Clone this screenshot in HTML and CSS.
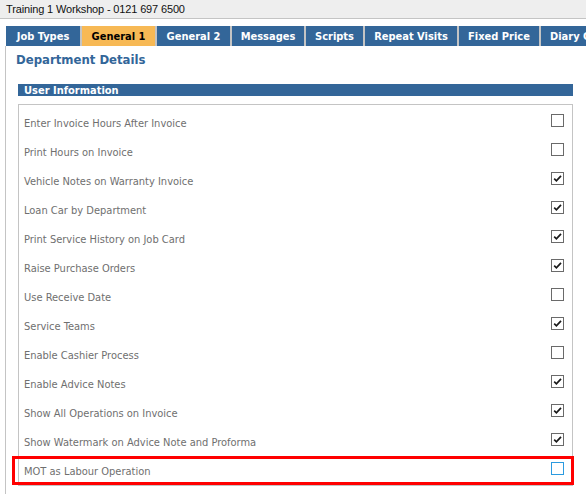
FILE: index.html
```html
<!DOCTYPE html>
<html>
<head>
<meta charset="utf-8">
<link rel="stylesheet" href="styles.css">
</head>
<body>
<div class="topbar">Training 1 Workshop - 0121 697 6500</div>
<div class="tabs">
  <div class="tab w74">Job Types</div>
  <div class="tab active w73">General 1</div>
  <div class="tab w73">General 2</div>
  <div class="tab w72">Messages</div>
  <div class="tab w57">Scripts</div>
  <div class="tab w92">Repeat Visits</div>
  <div class="tab w80">Fixed Price</div>
  <div class="tab w92">Diary Control</div>
</div>
<div class="panel">
  <h1 class="heading">Department Details</h1>
  <div class="section-bar">User Information</div>
  <div class="box">
    <div class="row"><span class="label">Enter Invoice Hours After Invoice</span><span class="cb"></span></div>
    <div class="row"><span class="label">Print Hours on Invoice</span><span class="cb"></span></div>
    <div class="row"><span class="label">Vehicle Notes on Warranty Invoice</span><span class="cb checked"><svg viewBox="0 0 11 11" width="11" height="11"><path d="M2.2 5.6 L4.4 7.8 L9 2.8" fill="none" stroke="#1a1a1a" stroke-width="1.7"/></svg></span></div>
    <div class="row"><span class="label">Loan Car by Department</span><span class="cb checked"><svg viewBox="0 0 11 11" width="11" height="11"><path d="M2.2 5.6 L4.4 7.8 L9 2.8" fill="none" stroke="#1a1a1a" stroke-width="1.7"/></svg></span></div>
    <div class="row"><span class="label">Print Service History on Job Card</span><span class="cb checked"><svg viewBox="0 0 11 11" width="11" height="11"><path d="M2.2 5.6 L4.4 7.8 L9 2.8" fill="none" stroke="#1a1a1a" stroke-width="1.7"/></svg></span></div>
    <div class="row"><span class="label">Raise Purchase Orders</span><span class="cb checked"><svg viewBox="0 0 11 11" width="11" height="11"><path d="M2.2 5.6 L4.4 7.8 L9 2.8" fill="none" stroke="#1a1a1a" stroke-width="1.7"/></svg></span></div>
    <div class="row"><span class="label">Use Receive Date</span><span class="cb"></span></div>
    <div class="row"><span class="label">Service Teams</span><span class="cb checked"><svg viewBox="0 0 11 11" width="11" height="11"><path d="M2.2 5.6 L4.4 7.8 L9 2.8" fill="none" stroke="#1a1a1a" stroke-width="1.7"/></svg></span></div>
    <div class="row"><span class="label">Enable Cashier Process</span><span class="cb"></span></div>
    <div class="row"><span class="label">Enable Advice Notes</span><span class="cb checked"><svg viewBox="0 0 11 11" width="11" height="11"><path d="M2.2 5.6 L4.4 7.8 L9 2.8" fill="none" stroke="#1a1a1a" stroke-width="1.7"/></svg></span></div>
    <div class="row"><span class="label">Show All Operations on Invoice</span><span class="cb checked"><svg viewBox="0 0 11 11" width="11" height="11"><path d="M2.2 5.6 L4.4 7.8 L9 2.8" fill="none" stroke="#1a1a1a" stroke-width="1.7"/></svg></span></div>
    <div class="row"><span class="label">Show Watermark on Advice Note and Proforma</span><span class="cb checked"><svg viewBox="0 0 11 11" width="11" height="11"><path d="M2.2 5.6 L4.4 7.8 L9 2.8" fill="none" stroke="#1a1a1a" stroke-width="1.7"/></svg></span></div>
    <div class="row highlighted"><span class="label">MOT as Labour Operation</span><span class="cb focus"></span><span class="red-outline"></span></div>
  </div>
</div>
</body>
</html>
```
FILE: styles.css
```css
html, body {
  margin: 0;
  padding: 0;
  background: #ffffff;
  overflow: hidden;
}
body {
  width: 586px;
  height: 494px;
  font-family: "DejaVu Sans Condensed", "DejaVu Sans", sans-serif;
}
.topbar {
  height: 19px;
  box-sizing: border-box;
  background: #eeeeee;
  border-bottom: 1px solid #c4c4c4;
  padding-left: 6px;
  font-family: "Liberation Sans", Arial, sans-serif;
  font-size: 11px;
  letter-spacing: -0.15px;
  line-height: 18px;
  color: #111111;
  white-space: nowrap;
}
.tabs {
  display: flex;
  margin-top: 7px;
  padding-left: 6px;
  height: 20px;
  white-space: nowrap;
}
.tab {
  flex-shrink: 0;
  box-sizing: border-box;
  height: 20px;
  background: #336699;
  color: #ffffff;
  font-weight: bold;
  font-size: 11px;
  padding-top: 2px;
  line-height: 18px;
  text-align: center;
  border-left: 2px solid #c4c4c4;
  overflow: hidden;
}
.tab:first-child {
  border-left: none;
}
.tab.active {
  background: #f7b955;
  color: #000000;
}
.w57 { width: 59px; }
.w72 { width: 74px; }
.w73 { width: 75px; }
.w74 { width: 74px; }
.w80 { width: 82px; }
.w92 { width: 94px; }

.panel {
  margin-left: 5px;
  border-left: 1px solid #c4c4c4;
  padding-left: 12px;
  padding-top: 1px;
  height: 460px;
}
.heading {
  margin: 4px 0 0 -2px;
  font-size: 13px;
  line-height: 18px;
  color: #336699;
  font-weight: bold;
}
.section-bar {
  margin-top: 15px;
  width: 555px;
  height: 12px;
  background: #336699;
  color: #ffffff;
  font-weight: bold;
  font-size: 11px;
  line-height: 14px;
  padding-left: 6px;
  box-sizing: border-box;
}
.box {
  margin-top: 8px;
  width: 555px;
  box-sizing: border-box;
  border: 1px solid #c4c4c4;
  padding: 1px 0 2px 0;
}
.row {
  position: relative;
  height: 29px;
  display: flex;
  align-items: center;
  justify-content: space-between;
  padding: 0 8px 0 5px;
}
.label {
  font-size: 11px;
  color: #6f6f6f;
  margin-top: 5px;
}
.cb {
  width: 13px;
  height: 13px;
  box-sizing: border-box;
  border: 1px solid #6a6a6a;
  background: #ffffff;
  display: flex;
  align-items: center;
  justify-content: center;
}
.cb svg {
  display: block;
}
.cb.focus {
  border-color: #2b9be0;
}
.red-outline {
  position: absolute;
  left: -7px;
  right: -2px;
  top: 2px;
  height: 29px;
  box-sizing: border-box;
  border: 3px solid #ff0000;
  pointer-events: none;
}
```
